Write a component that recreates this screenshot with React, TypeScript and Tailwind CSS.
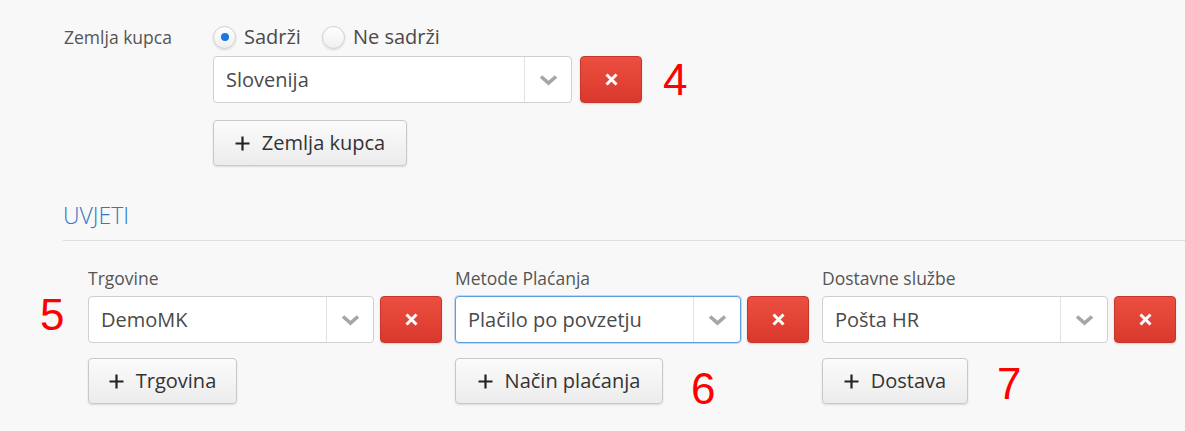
const font = { fontFamily: '"Open Sans", "Noto Sans", sans-serif' };

function Chevron() {
  return (
    <svg width="19" height="12" viewBox="0 0 19 12" className="text-[#a6a6a6]">
      <polyline points="2,2.5 9.5,9 17,2.5" fill="none" stroke="currentColor" strokeWidth="3.6" />
    </svg>
  );
}

function Cross() {
  return (
    <svg width="13" height="13" viewBox="0 0 13 13">
      <path d="M1.5 1.5 L11.5 11.5 M11.5 1.5 L1.5 11.5" stroke="#fff" strokeWidth="3" />
    </svg>
  );
}

function Select({ value, width, focused }: { value: string; width: string; focused?: boolean }) {
  return (
    <div
      className={`flex h-[47px] items-stretch rounded-[4px] border bg-white ${width} ${
        focused
          ? 'border-[#5b9ee6] shadow-[0_0_0_1px_rgba(91,158,230,0.35)]'
          : 'border-[#cfcfcf]'
      }`}
    >
      <div className="flex flex-1 items-center pl-[12px] text-[20px] text-[#4a4a4a]">{value}</div>
      <div className="flex w-[47px] items-center justify-center border-l border-[#e2e2e2]">
        <Chevron />
      </div>
    </div>
  );
}

function RemoveButton() {
  return (
    <button
      type="button"
      className="flex h-[47px] w-[62px] items-center justify-center rounded-[4px] border border-[#c5372a] bg-gradient-to-b from-[#ec4e40] to-[#d9392c] shadow-[0_1px_2px_rgba(0,0,0,0.15)]"
    >
      <Cross />
    </button>
  );
}

function AddButton({ label, width }: { label: string; width: string }) {
  return (
    <button
      type="button"
      className={`flex h-[46px] shrink-0 items-center justify-center gap-[12px] rounded-[4px] border border-[#c9c9c9] bg-gradient-to-b from-[#fbfbfb] to-[#ececec] text-[20px] text-[#333] shadow-[0_1px_2px_rgba(0,0,0,0.12)] ${width}`}
    >
      <svg width="15" height="15" viewBox="0 0 15 15">
        <path d="M7.5 0.5 V14.5 M0.5 7.5 H14.5" stroke="#222" strokeWidth="2.2" />
      </svg>
      <span>{label}</span>
    </button>
  );
}

function Marker({ n, className }: { n: string; className?: string }) {
  return (
    <span
      className={`text-[44px] leading-none text-[#ff0000] ${className ?? ''}`}
      style={{ fontFamily: '"Liberation Sans", Arial, sans-serif' }}
    >
      {n}
    </span>
  );
}

function Radio({ checked, label }: { checked?: boolean; label: string }) {
  return (
    <label className="flex items-center gap-[8px]">
      <span className="flex h-[23px] w-[23px] items-center justify-center rounded-full border border-[#cfcfcf] bg-gradient-to-b from-white to-[#efefef] shadow-[0_1px_2px_rgba(0,0,0,0.12)]">
        {checked ? <span className="h-[8px] w-[8px] rounded-full bg-[#1b78e2]" /> : null}
      </span>
      <span className="text-[20px] text-[#4a4a4a]">{label}</span>
    </label>
  );
}

function Column({
  title,
  value,
  add,
  addWidth,
  focused,
  marker,
  markerClass,
}: {
  title: string;
  value: string;
  add: string;
  addWidth: string;
  focused?: boolean;
  marker?: string;
  markerClass?: string;
}) {
  return (
    <div className="w-[367px] shrink-0">
      <p className="h-[22px] text-[17.5px] leading-[22px] text-[#555]">{title}</p>
      <div className="mt-[7px] flex items-center gap-[6px]">
        <Select value={value} width="w-[286px]" focused={focused} />
        <RemoveButton />
      </div>
      <div className="mt-[15px] flex items-start">
        <AddButton label={add} width={addWidth} />
        {marker ? <Marker n={marker} className={markerClass} /> : null}
      </div>
    </div>
  );
}

export default function App() {
  return (
    <div className="min-h-screen bg-[#f8f8f8] text-[#444]" style={font}>
      <section className="flex pl-[64px] pt-[25px]">
        <p className="h-[24px] w-[149px] text-[17.5px] leading-[24px] text-[#555]">Zemlja kupca</p>
        <div>
          <div className="flex h-[24px] items-center gap-[21px]">
            <Radio checked label="Sadrži" />
            <Radio label="Ne sadrži" />
          </div>
          <div className="mt-[7px] flex items-center gap-[8px]">
            <Select value="Slovenija" width="w-[359px]" />
            <RemoveButton />
            <Marker n="4" className="ml-[13px]" />
          </div>
          <div className="mt-[17px]">
            <AddButton label="Zemlja kupca" width="w-[194px]" />
          </div>
        </div>
      </section>

      <div className="ml-[63px] mt-[35px] border-b border-[#dedede] pb-[11px]">
        <h2 className="text-[23px] font-light leading-[28px] text-[#2f78c4]">UVJETI</h2>
      </div>

      <section className="relative mt-[26px] flex pl-[88px]">
        <Marker n="5" className="absolute left-[40px] top-[26px]" />
        <Column title="Trgovine" value="DemoMK" add="Trgovina" addWidth="w-[149px]" />
        <Column
          title="Metode Plaćanja"
          value="Plačilo po povzetju"
          add="Način plaćanja"
          addWidth="w-[208px]"
          focused
          marker="6"
          markerClass="ml-[28px] mt-[9px]"
        />
        <Column
          title="Dostavne službe"
          value="Pošta HR"
          add="Dostava"
          addWidth="w-[146px]"
          marker="7"
          markerClass="ml-[29px] mt-[4px]"
        />
      </section>
    </div>
  );
}
